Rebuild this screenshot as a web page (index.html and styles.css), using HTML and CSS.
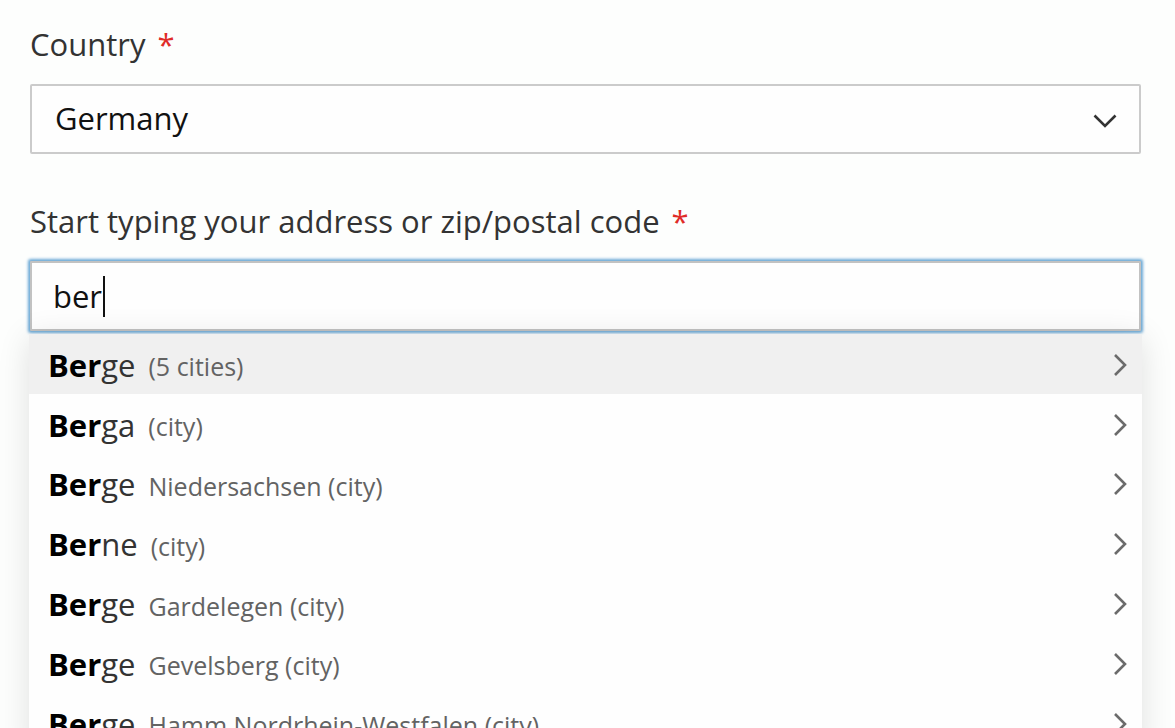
FILE: index.html
```html
<!DOCTYPE html>
<html lang="en">
<head>
<meta charset="utf-8">
<title>Address</title>
<link rel="stylesheet" href="styles.css">
</head>
<body>
<div class="form">
  <div class="field">
    <label class="label">Country <span class="req">*</span></label>
    <div class="select">
      <span class="select-value">Germany</span>
      <svg class="select-arrow" width="24" height="14" viewBox="0 0 24 14"><path d="M1.5 1.5 L12 12 L22.5 1.5" fill="none" stroke="#333" stroke-width="2.6"/></svg>
    </div>
  </div>
  <div class="field field-address">
    <label class="label">Start typing your address or zip/postal code <span class="req">*</span></label>
    <div class="combo">
      <div class="input"><span class="input-text">ber</span><span class="caret"></span></div>
      <ul class="suggest">
        <li class="item active"><span class="name"><b>Ber</b>ge</span><span class="meta">(5 cities)</span><svg class="chev" width="14" height="24" viewBox="0 0 14 24"><path d="M2 2 L12 12 L2 22" fill="none" stroke="#6b6b6b" stroke-width="2.6"/></svg></li>
        <li class="item"><span class="name"><b>Ber</b>ga</span><span class="meta">(city)</span><svg class="chev" width="14" height="24" viewBox="0 0 14 24"><path d="M2 2 L12 12 L2 22" fill="none" stroke="#6b6b6b" stroke-width="2.6"/></svg></li>
        <li class="item"><span class="name"><b>Ber</b>ge</span><span class="meta">Niedersachsen (city)</span><svg class="chev" width="14" height="24" viewBox="0 0 14 24"><path d="M2 2 L12 12 L2 22" fill="none" stroke="#6b6b6b" stroke-width="2.6"/></svg></li>
        <li class="item"><span class="name"><b>Ber</b>ne</span><span class="meta">(city)</span><svg class="chev" width="14" height="24" viewBox="0 0 14 24"><path d="M2 2 L12 12 L2 22" fill="none" stroke="#6b6b6b" stroke-width="2.6"/></svg></li>
        <li class="item"><span class="name"><b>Ber</b>ge</span><span class="meta">Gardelegen (city)</span><svg class="chev" width="14" height="24" viewBox="0 0 14 24"><path d="M2 2 L12 12 L2 22" fill="none" stroke="#6b6b6b" stroke-width="2.6"/></svg></li>
        <li class="item"><span class="name"><b>Ber</b>ge</span><span class="meta">Gevelsberg (city)</span><svg class="chev" width="14" height="24" viewBox="0 0 14 24"><path d="M2 2 L12 12 L2 22" fill="none" stroke="#6b6b6b" stroke-width="2.6"/></svg></li>
        <li class="item"><span class="name"><b>Ber</b>ge</span><span class="meta">Hamm Nordrhein-Westfalen (city)</span><svg class="chev" width="14" height="24" viewBox="0 0 14 24"><path d="M2 2 L12 12 L2 22" fill="none" stroke="#6b6b6b" stroke-width="2.6"/></svg></li>
      </ul>
    </div>
  </div>
</div>
</body>
</html>
```
FILE: styles.css
```css
html {
  overflow: hidden;
}
html, body {
  margin: 0;
  padding: 0;
  background: #fdfefd;
}
body {
  font-family: "Open Sans", "Liberation Sans", sans-serif;
  color: #333;
  min-height: 728px;
}
.form {
  padding: 22px 34px 0 30px;
}
.field {
  display: flex;
  flex-direction: column;
}
.field-address {
  margin-top: 45px;
}
.label {
  font-size: 31px;
  line-height: 44px;
  color: #333;
  margin-bottom: 18px;
}
.req {
  color: #e02b27;
  margin-left: 4px;
}
.select {
  height: 70px;
  box-sizing: border-box;
  border: 2px solid #cbcbcb;
  border-radius: 2px;
  background: #fefefe;
  display: flex;
  align-items: center;
  padding: 2px 22px 0 23px;
}
.select-value {
  flex: 1;
  font-size: 31px;
  color: #111;
  margin-top: -4px;
}
.select-arrow {
  display: block;
  margin-top: 2px;
}
.combo {
  position: relative;
}
.input {
  height: 70px;
  box-sizing: border-box;
  border: 2px solid #c2c2c2;
  border-radius: 1px;
  background: #fefefe;
  box-shadow: 0 0 3px 2px #6aa8d6;
  display: flex;
  align-items: center;
  padding: 0 0 0 21px;
}
.input-text {
  font-size: 31px;
  color: #111;
}
.caret {
  width: 2px;
  height: 41px;
  background: #111;
  margin-left: 1px;
}
.suggest {
  position: absolute;
  left: -1px;
  right: -1px;
  top: 73px;
  margin: 0;
  padding: 0;
  list-style: none;
  background: #fefefe;
  box-shadow: 0 4px 30px rgba(0, 0, 0, 0.12);
}
.item {
  height: 59.8px;
  display: flex;
  align-items: center;
  padding: 2px 15px 0 19px;
  box-sizing: border-box;
}
.item.active {
  background: #f0f0f0;
}
.name {
  font-size: 31px;
  color: #333;
}
.name b {
  color: #000;
  font-weight: 700;
}
.meta {
  flex: 1;
  font-size: 25px;
  color: #636363;
  margin-left: 13px;
  padding-top: 3px;
}
.chev {
  display: block;
}
```
